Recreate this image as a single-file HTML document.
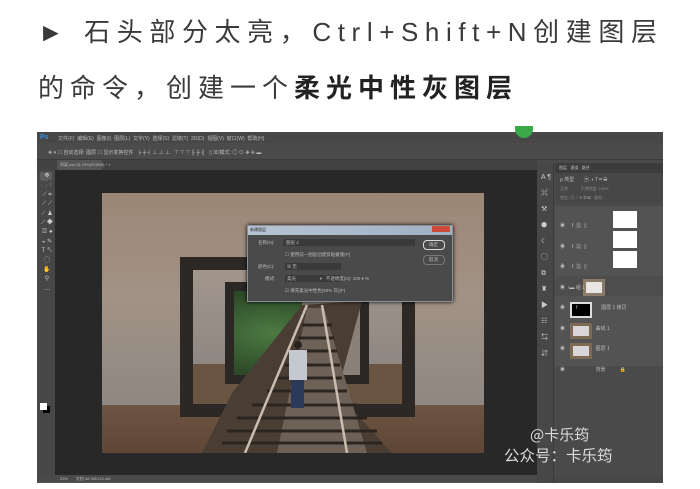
<!DOCTYPE html>
<html><head><meta charset="utf-8"><style>
*{margin:0;padding:0;box-sizing:border-box}
body{width:700px;height:489px;background:#fff;position:relative;overflow:hidden;font-family:"Liberation Sans","Noto Sans CJK SC",sans-serif}
.a{position:absolute}
.t{color:#3a3a3a;font-size:26px;white-space:nowrap}
.ps{font-size:5px;color:#bbb;white-space:nowrap}
</style></head><body>
<div class="a t" style="left:38px;top:12px;letter-spacing:6.6px">► 石头部分太亮，Ctrl+Shift+N创建图层</div>
<div class="a t" style="left:38px;top:68px;letter-spacing:6px">的命令，创建一个<b style="color:#222">柔光中性灰图层</b></div>

<!-- PS window -->
<div class="a" style="left:37px;top:132px;width:626px;height:351px;background:#535353"></div>
<div class="a" style="left:37px;top:132px;width:626px;height:11px;background:#474747"></div>
<div class="a ps" style="left:40px;top:134px;color:#3b8fe0;font-weight:bold;font-size:7px">Ps</div>
<div class="a ps" style="left:58px;top:135px">文件(F)&nbsp; 编辑(E)&nbsp; 图像(I)&nbsp; 图层(L)&nbsp; 文字(Y)&nbsp; 选择(S)&nbsp; 滤镜(T)&nbsp; 3D(D)&nbsp; 视图(V)&nbsp; 窗口(W)&nbsp; 帮助(H)</div>
<div class="a" style="left:515px;top:126px;width:18px;height:12px;border-radius:0 0 9px 9px;background:#3aa94a"></div>
<div class="a" style="left:37px;top:143px;width:626px;height:17px;background:#4b4b4b;border-bottom:1px solid #3a3a3a"></div>
<div class="a ps" style="left:48px;top:149px">✥ ▾ ☐ 自动选择: 图层 ☐ 显示变换控件 &nbsp; ╞ ╪ ╡ ⊥ ⊥ ⊥ &nbsp; ⊤ ⊤ ⊤ ╟ ╫ ╢ &nbsp; ▯ 3D模式: ◎ ⊙ ✥ ✣ ▬</div>
<div class="a" style="left:37px;top:160px;width:500px;height:10px;background:#424242"></div>
<div class="a" style="left:57px;top:160px;width:45px;height:10px;background:#555"></div>
<div class="a ps" style="left:60px;top:162px;font-size:4px">桥梁.psd @ 23%(RGB/8) * ×</div>
<!-- tools -->
<div class="a" style="left:37px;top:170px;width:18px;height:305px;background:#474747"></div>
<div class="a" style="left:40px;top:172px;width:12px;height:8px;background:#5f5f5f"></div>
<div class="a ps" style="left:41px;top:172px;font-size:6px;line-height:9.4px;color:#ccc;width:12px;white-space:normal;text-align:center">✥ ⬚ ◌ ⟋ ⌗ ⟋ ⟋ ⟋ ♟ ⟋ ◆ ▥ ● ◒ ✎ T ↖ ◯ ✋ ⚲ ⋯</div>
<div class="a" style="left:43px;top:406px;width:7px;height:7px;background:#000"></div>
<div class="a" style="left:40px;top:403px;width:7px;height:7px;background:#fff"></div>
<!-- canvas -->
<div class="a" style="left:55px;top:170px;width:482px;height:305px;background:#282828"></div>
<!-- image -->
<div class="a" style="left:102px;top:193px;width:382px;height:260px;overflow:hidden;background:linear-gradient(90deg,#9a887a,#ab9a8c 50%,#a89a92)">
 <div class="a" style="left:0;top:0;width:382px;height:212px;background:linear-gradient(180deg,#9c8776 0%,#a19285 50%,#8f8882 100%)"></div>
 <div class="a" style="left:0;top:212px;width:382px;height:48px;background:linear-gradient(180deg,#6e5442,#5e4636)"></div>
 <div class="a" style="left:78px;top:64px;width:235px;height:160px;border:13px solid #2b2826;background:#9a9088"></div>
 <div class="a" style="left:91px;top:77px;width:209px;height:134px;background:linear-gradient(180deg,#a2968c,#8f8782 70%,#6a5442 70%)"></div>
 <div class="a" style="left:123px;top:89px;width:144px;height:102px;border:9px solid #2a2724;background:#3b5a35"></div>
 <div class="a" style="left:132px;top:98px;width:126px;height:84px;background:radial-gradient(ellipse at 30% 50%,#4c7a42,#2d4a28 70%)"></div>
 <div class="a" style="left:200px;top:98px;width:58px;height:84px;background:#8a8078"></div>
 <svg class="a" style="left:0;top:0" width="382" height="260">
  <polygon points="200,112 260,108 235,200 290,260 100,260 130,200" fill="#4a3e34"/>
  <polygon points="175,260 205,115 222,115 265,260" fill="#6e6258"/>
  <g stroke="#2c251f" stroke-width="3">
   <line x1="120" y1="250" x2="280" y2="250"/><line x1="125" y1="238" x2="275" y2="238"/>
   <line x1="135" y1="225" x2="265" y2="225"/><line x1="150" y1="212" x2="255" y2="212"/>
   <line x1="165" y1="198" x2="245" y2="198"/><line x1="175" y1="185" x2="240" y2="185"/>
   <line x1="183" y1="172" x2="238" y2="172"/><line x1="190" y1="158" x2="235" y2="158"/>
   <line x1="196" y1="145" x2="232" y2="145"/><line x1="200" y1="132" x2="230" y2="132"/>
  </g>
  <line x1="143" y1="260" x2="205" y2="112" stroke="#c9bdb0" stroke-width="2.5"/>
  <line x1="245" y1="260" x2="220" y2="112" stroke="#c9bdb0" stroke-width="2.5"/>
  <rect x="187" y="157" width="18" height="30" fill="#c6c8d0"/>
  <circle cx="196" cy="152" r="4" fill="#2a2320"/>
  <rect x="189" y="187" width="13" height="28" fill="#2b3a58"/>
 </svg>
</div>
<!-- dialog -->
<div class="a" style="left:247px;top:225px;width:206px;height:77px;background:#4a4a4a;border:1px solid #8a8f98;box-shadow:0 0 4px #000"></div>
<div class="a" style="left:248px;top:226px;width:204px;height:9px;background:linear-gradient(90deg,#b8c4d4,#9fb0c4)"></div>
<div class="a" style="left:432px;top:226px;width:18px;height:6px;background:#d04a3a"></div>
<div class="a ps" style="left:250px;top:227px;font-size:4px;color:#222">新建图层</div>
<div class="a ps" style="left:258px;top:240px;font-size:4.5px">名称(N):</div>
<div class="a" style="left:283px;top:239px;width:132px;height:7px;background:#3a3a3a"></div>
<div class="a ps" style="left:286px;top:240px;font-size:4.5px">图层 2</div>
<div class="a ps" style="left:285px;top:252px;font-size:4.5px">☐ 使用前一图层创建剪贴蒙版(P)</div>
<div class="a ps" style="left:258px;top:264px;font-size:4.5px">颜色(C):</div>
<div class="a" style="left:285px;top:263px;width:56px;height:7px;background:#3a3a3a"></div>
<div class="a ps" style="left:287px;top:264px;font-size:4.5px">☒ 无</div>
<div class="a ps" style="left:265px;top:276px;font-size:4.5px">模式: </div>
<div class="a" style="left:285px;top:275px;width:56px;height:7px;background:#3a3a3a"></div>
<div class="a ps" style="left:287px;top:276px;font-size:4.5px">柔光 &nbsp; &nbsp; &nbsp; &nbsp; &nbsp; &nbsp; &nbsp; &nbsp; &nbsp; ▾ &nbsp; 不透明度(O): 100 ▾ %</div>
<div class="a ps" style="left:285px;top:288px;font-size:4.5px">☑ 填充柔光中性色(50% 灰)(F)</div>
<div class="a" style="left:423px;top:240px;width:22px;height:10px;border:1px solid #ddd;border-radius:4px"></div>
<div class="a ps" style="left:429px;top:242px;font-size:4.5px">确定</div>
<div class="a" style="left:423px;top:255px;width:22px;height:10px;border:1px solid #777;border-radius:4px"></div>
<div class="a ps" style="left:429px;top:257px;font-size:4.5px">取消</div>
<!-- right side -->
<div class="a" style="left:537px;top:160px;width:126px;height:323px;background:#4a4a4a"></div>
<div class="a" style="left:537px;top:163px;width:17px;height:320px;background:#474747;border-right:1px solid #3a3a3a"></div>
<div class="a ps" style="left:541px;top:170px;font-size:7px;line-height:16px;width:10px;white-space:normal;color:#ccc">A ¶ ⌘ ⚒ ⬢ ☾ ◯ ⧉ ♜ ▶ ☷ ⇆ ⇵</div>
<div class="a" style="left:555px;top:163px;width:108px;height:10px;background:#3c3c3c"></div>
<div class="a ps" style="left:559px;top:165px;font-size:4px">图层 &nbsp; 通道 &nbsp; 路径</div>
<div class="a" style="left:555px;top:173px;width:108px;height:30px;background:#474747"></div>
<div class="a ps" style="left:560px;top:176px;font-size:5px">ρ 类型 &nbsp; &nbsp; &nbsp; ▣ ◑ T ⌗ ⬓</div>
<div class="a ps" style="left:560px;top:186px;font-size:4px;color:#888">正常 &nbsp; &nbsp; &nbsp; &nbsp; &nbsp; 不透明度: 100%</div>
<div class="a ps" style="left:560px;top:195px;font-size:4px;color:#888">锁定: ▨ ⟋ ✥ ⧉ ⬓ &nbsp; 填充:</div>
<div class="a" style="left:555px;top:206px;width:108px;height:160px;background:#535353"></div>
<div class="a" style="left:555px;top:276px;width:108px;height:20px;background:#4d4d4d"></div>
<div class="a" style="left:613px;top:211px;width:24px;height:17px;background:#fff"></div>
<div class="a" style="left:613px;top:231px;width:24px;height:17px;background:#fff"></div>
<div class="a" style="left:613px;top:251px;width:24px;height:17px;background:#fff"></div>
<div class="a" style="left:583px;top:279px;width:22px;height:17px;background:#e8e6e2;border:3px solid #8b7c6a"></div>
<div class="a" style="left:570px;top:302px;width:22px;height:16px;background:#000;border:2px solid #ddd"></div>
<div class="a" style="left:570px;top:323px;width:22px;height:16px;background:#d8d6d8;border:3px solid #7d6a55"></div>
<div class="a" style="left:570px;top:343px;width:22px;height:16px;background:#d8d6d8;border:3px solid #7d6a55"></div>
<div class="a ps" style="left:560px;top:216px;line-height:20.5px;font-size:5px;white-space:pre">◉     f  ▦  ▯
◉     f  ▦  ▯
◉     f  ▦  ▯
◉  ›▬ 组 1
◉        f                 图层 1 拷贝
◉                      曲线 1
◉                      图层 1
◉                      背景          🔒</div>
<div class="a" style="left:555px;top:475px;width:108px;height:8px;background:#474747"></div>
<div class="a" style="left:37px;top:475px;width:500px;height:7px;background:#4a4a4a"></div>
<div class="a ps" style="left:60px;top:476px;font-size:4px">23% &nbsp; &nbsp; &nbsp; 文档:36.0M/132.4M</div>
<!-- watermark -->
<div class="a" style="left:530px;top:424px;font-size:15px;color:#dcdcdc;font-family:'Noto Sans CJK SC',sans-serif">@卡乐筠</div>
<div class="a" style="left:504px;top:444px;font-size:15.5px;color:#dcdcdc;font-family:'Noto Sans CJK SC',sans-serif">公众号：卡乐筠</div>
</body></html>
